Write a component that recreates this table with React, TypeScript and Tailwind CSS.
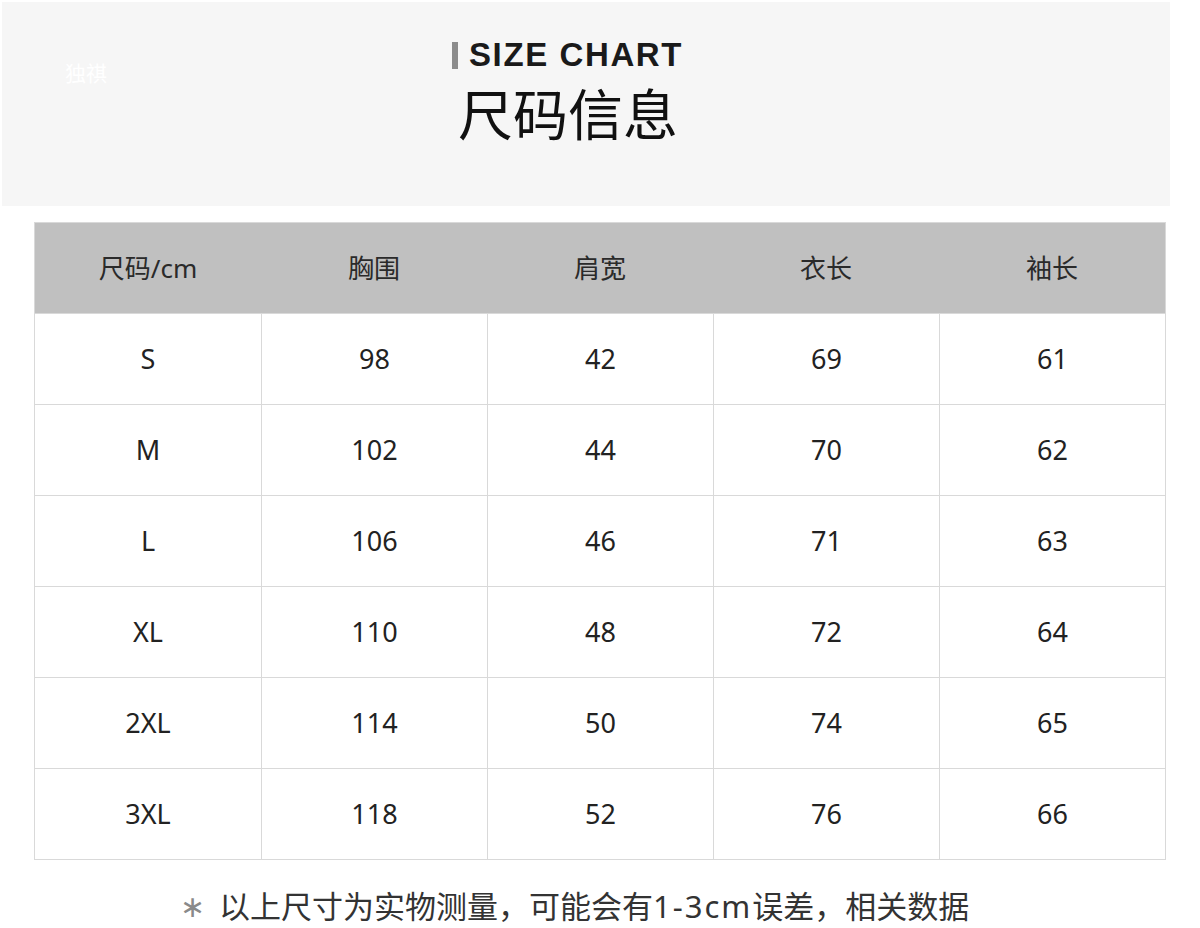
import React from "react";

const font = { fontFamily: '"Noto Sans", "Noto Sans CJK SC", sans-serif' };

const headers = ["尺码/cm", "胸围", "肩宽", "衣长", "袖长"];
const rows = [
  ["S", "98", "42", "69", "61"],
  ["M", "102", "44", "70", "62"],
  ["L", "106", "46", "71", "63"],
  ["XL", "110", "48", "72", "64"],
  ["2XL", "114", "50", "74", "65"],
  ["3XL", "118", "52", "76", "66"],
];

export default function App() {
  return (
    <div className="w-[1200px] h-[928px] overflow-hidden bg-white text-[#222]" style={font}>
      {/* Heading block */}
      <div className="ml-[2px] mt-[2px] w-[1168px] h-[204px] bg-[#f6f6f6] flex">
        <div className="pl-[63px] pt-[56px] w-[450px] text-[21px] text-white">独祺</div>
        <div className="pt-[36px] flex flex-col">
          <div className="flex items-center gap-[11px]">
            <div className="w-[6px] h-[27px] bg-[#8c8c8c]" />
            <span
              className="text-[33px] leading-[34px] font-bold tracking-[1.6px] text-[#1a1a1a]"
              style={{ fontFamily: '"Liberation Sans", sans-serif' }}
            >
              SIZE CHART
            </span>
          </div>
          <div className="mt-[11px] ml-[6px] text-[55px] leading-[62px] text-[#111]">尺码信息</div>
        </div>
      </div>

      {/* Size table */}
      <div className="mt-[16px] ml-[34px] w-[1132px] border border-[#d9d9d9]">
        <div className="grid grid-cols-5 h-[90px] bg-[#c0c0c0] text-[26px] text-[#2a2a2a]">
          {headers.map((h) => (
            <div key={h} className="flex items-center justify-center">
              {h}
            </div>
          ))}
        </div>
        {rows.map((r) => (
          <div key={r[0]} className="grid grid-cols-5 h-[91px] border-t border-[#d9d9d9] text-[27px]">
            {r.map((c, i) => (
              <div
                key={i}
                className={`flex items-center justify-center ${i > 0 ? "border-l border-[#d9d9d9]" : ""}`}
              >
                {c}
              </div>
            ))}
          </div>
        ))}
      </div>

      {/* Note */}
      <div className="mt-[28px] pl-[180px] flex items-center text-[31px] leading-[36px] text-[#333] whitespace-nowrap">
        <span className="text-[#8a8a8a] text-[30px] mr-[14px]">∗</span>
        <span>
          以上尺寸为实物测量，可能会有<span className="tracking-[2px]">1-3cm</span>误差，相关数据
        </span>
      </div>
    </div>
  );
}
